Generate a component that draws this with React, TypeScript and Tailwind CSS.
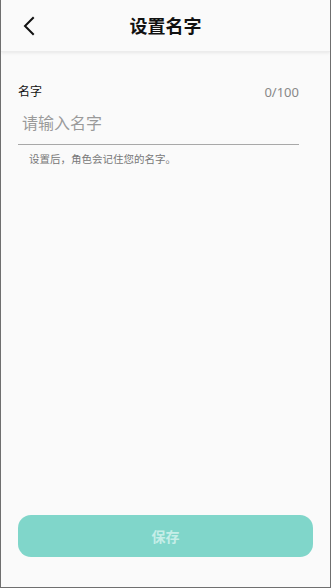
export default function App() {
  return (
    <div
      className="w-[331px] h-[588px] bg-[#fafafa] border-l border-r border-b border-[#6f6f6f] flex flex-col overflow-hidden"
      style={{ fontFamily: '"Noto Sans", "Noto Sans CJK SC", sans-serif' }}
    >
      {/* header */}
      <div className="h-[52px] shrink-0 flex items-center relative bg-[#fafafa] shadow-[0_1px_3px_rgba(0,0,0,0.08)] border-b border-[#ececec]">
        <button className="absolute left-[18px] top-[14px] w-[20px] h-[24px] flex items-center justify-center">
          <svg width="14" height="20" viewBox="0 0 14 20" fill="none">
            <path d="M11 2 L3 10 L11 18" stroke="#111" strokeWidth="2" strokeLinecap="square" />
          </svg>
        </button>
        <h1 className="w-full text-center text-[18px] font-bold text-[#111] leading-none">设置名字</h1>
      </div>

      {/* form */}
      <div className="px-[17px] pt-[32px] flex-1">
        <div className="flex justify-between items-center pr-[14px] h-[16px] leading-[16px]">
          <span className="text-[12px] text-[#111]">名字</span>
          <span className="text-[13px] text-[#888]">0/100</span>
        </div>
        <div className="mr-[14px] border-b border-[#a8a8a8] pt-[11px] pb-[9px] pl-[4px]">
          <input
            className="w-full bg-transparent outline-none text-[16px] text-[#111] placeholder:text-[#9a9a9a] leading-[24px]"
            placeholder="请输入名字"
          />
        </div>
        <p className="text-[10.5px] text-[#777] pl-[11px] pt-[7px]">设置后，角色会记住您的名字。</p>
      </div>

      {/* save */}
      <div className="px-[17px] pb-[30px]">
        <button className="w-full h-[42px] rounded-[13px] bg-[#80d6ca] text-[14px] font-bold text-[#c6eee8]">
          保存
        </button>
      </div>
    </div>
  );
}
